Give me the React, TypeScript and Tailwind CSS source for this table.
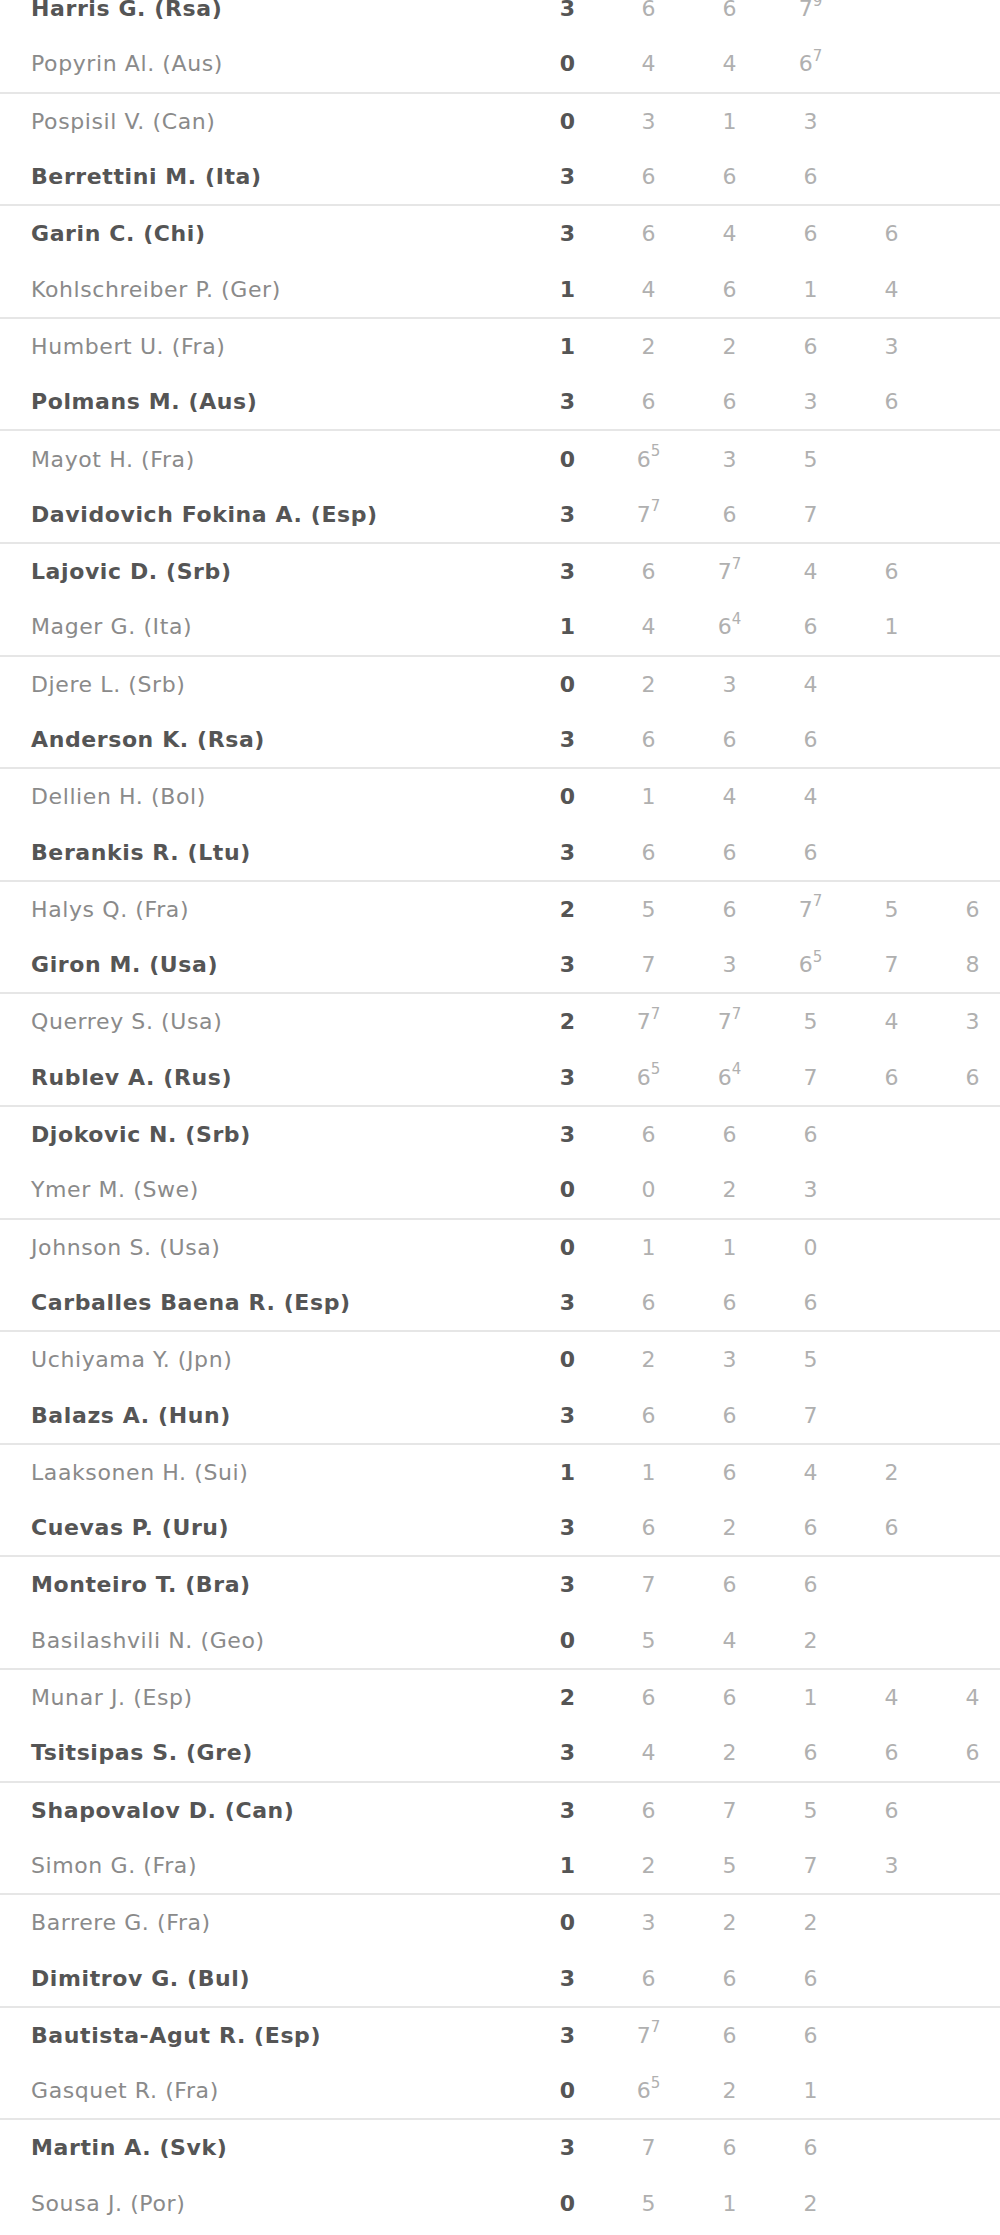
import React from 'react';

type Set = { g: number; tb?: number };
type Player = { name: string; won: boolean; sets: number; games: Set[] };
type Match = [Player, Player];

// helper: "6 7/7 4" -> sets, tiebreak after slash
const g = (s: string): Set[] =>
    s.split(' ').map((t) => {
        const [a, b] = t.split('/');
        return b !== undefined ? { g: Number(a), tb: Number(b) } : { g: Number(a) };
    });

const p = (name: string, won: boolean, sets: number, games: string): Player => ({ name, won, sets, games: g(games) });

const MATCHES: Match[] = [
    [p('Harris G. (Rsa)', true, 3, '6 6 7/9'), p('Popyrin Al. (Aus)', false, 0, '4 4 6/7')],
    [p('Pospisil V. (Can)', false, 0, '3 1 3'), p('Berrettini M. (Ita)', true, 3, '6 6 6')],
    [p('Garin C. (Chi)', true, 3, '6 4 6 6'), p('Kohlschreiber P. (Ger)', false, 1, '4 6 1 4')],
    [p('Humbert U. (Fra)', false, 1, '2 2 6 3'), p('Polmans M. (Aus)', true, 3, '6 6 3 6')],
    [p('Mayot H. (Fra)', false, 0, '6/5 3 5'), p('Davidovich Fokina A. (Esp)', true, 3, '7/7 6 7')],
    [p('Lajovic D. (Srb)', true, 3, '6 7/7 4 6'), p('Mager G. (Ita)', false, 1, '4 6/4 6 1')],
    [p('Djere L. (Srb)', false, 0, '2 3 4'), p('Anderson K. (Rsa)', true, 3, '6 6 6')],
    [p('Dellien H. (Bol)', false, 0, '1 4 4'), p('Berankis R. (Ltu)', true, 3, '6 6 6')],
    [p('Halys Q. (Fra)', false, 2, '5 6 7/7 5 6'), p('Giron M. (Usa)', true, 3, '7 3 6/5 7 8')],
    [p('Querrey S. (Usa)', false, 2, '7/7 7/7 5 4 3'), p('Rublev A. (Rus)', true, 3, '6/5 6/4 7 6 6')],
    [p('Djokovic N. (Srb)', true, 3, '6 6 6'), p('Ymer M. (Swe)', false, 0, '0 2 3')],
    [p('Johnson S. (Usa)', false, 0, '1 1 0'), p('Carballes Baena R. (Esp)', true, 3, '6 6 6')],
    [p('Uchiyama Y. (Jpn)', false, 0, '2 3 5'), p('Balazs A. (Hun)', true, 3, '6 6 7')],
    [p('Laaksonen H. (Sui)', false, 1, '1 6 4 2'), p('Cuevas P. (Uru)', true, 3, '6 2 6 6')],
    [p('Monteiro T. (Bra)', true, 3, '7 6 6'), p('Basilashvili N. (Geo)', false, 0, '5 4 2')],
    [p('Munar J. (Esp)', false, 2, '6 6 1 4 4'), p('Tsitsipas S. (Gre)', true, 3, '4 2 6 6 6')],
    [p('Shapovalov D. (Can)', true, 3, '6 7 5 6'), p('Simon G. (Fra)', false, 1, '2 5 7 3')],
    [p('Barrere G. (Fra)', false, 0, '3 2 2'), p('Dimitrov G. (Bul)', true, 3, '6 6 6')],
    [p('Bautista-Agut R. (Esp)', true, 3, '7/7 6 6'), p('Gasquet R. (Fra)', false, 0, '6/5 2 1')],
    [p('Martin A. (Svk)', true, 3, '7 6 6'), p('Sousa J. (Por)', false, 0, '5 1 2')],
];

const Row: React.FC<{ player: Player }> = ({ player }) => (
    <div className="flex h-[55.3px] items-center">
        <div
            className={
                player.won
                    ? 'w-[527px] shrink-0 pl-[31px] font-bold tracking-[0.6px] text-[#555555]'
                    : 'w-[527px] shrink-0 pl-[31px] tracking-[0.6px] text-[#8a8a8a]'
            }
        >
            {player.name}
        </div>
        <div className="w-[81px] shrink-0 text-center font-bold text-[#555555]">{player.sets}</div>
        {player.games.map((s, i) => (
            <div key={i} className="w-[81px] shrink-0 text-center text-[#b0b0b0]">
                {s.g}
                {s.tb !== undefined && <sup className="text-[15px] -top-[0.7em]">{s.tb}</sup>}
            </div>
        ))}
    </div>
);

export default function App() {
    return (
        <div className="w-[1000px] h-[2235px] overflow-hidden bg-white">
            <div className="-mt-[19px] text-[22px] font-['DejaVu_Sans',sans-serif]">
                {MATCHES.map((m, i) => (
                    <div key={i} className="border-b-2 border-[#e6e6e6] last:border-b-0">
                        <Row player={m[0]} />
                        <Row player={m[1]} />
                    </div>
                ))}
            </div>
        </div>
    );
}
